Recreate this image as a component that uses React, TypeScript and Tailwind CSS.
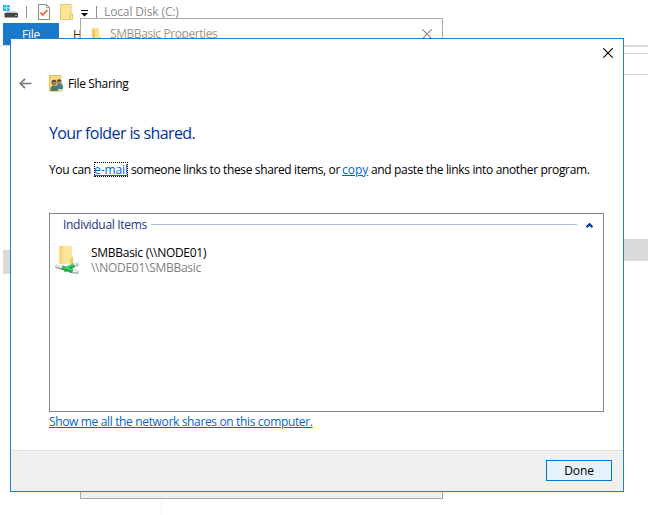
import React from "react";

function DriveIcon() {
  return (
    <svg width="16" height="14" viewBox="0 0 16 14" className="shrink-0">
      <g fill="#10b7f2">
        <rect x="0" y="0" width="3" height="2.6" />
        <rect x="3.7" y="0" width="3" height="2.6" />
        <rect x="0" y="3.3" width="3" height="2.7" />
        <rect x="3.7" y="3.3" width="3" height="2.7" />
      </g>
      <path d="M3.500 6.500h9.500l2 2.500H1.500z" fill="#b9bcbd" />
      <rect x="1.500" y="8" width="13.500" height="4.500" rx=".5" fill="#42474a" />
      <rect x="12" y="10" width="2" height="1" fill="#4be07a" />
    </svg>
  );
}

function PageCheckIcon() {
  return (
    <svg width="12" height="16" viewBox="0 0 12 16" className="shrink-0">
      <path d="M.5.5h8l3 3v12H.5z" fill="#fbfbfb" stroke="#8b8b8b" />
      <path d="M8.5.5v3h3" fill="none" stroke="#8b8b8b" strokeWidth=".8" />
      <path d="M2.500 8.500l2.200 2.500 4.800-5" fill="none" stroke="#e9622c" strokeWidth="1.700" />
    </svg>
  );
}

function FolderIcon({ className = "" }: { className?: string }) {
  return (
    <svg width="13" height="16" viewBox="0 0 13 16" className={"shrink-0 " + className}>
      <path d="M.5.5h10.500V9.500h1.500v6H.5z" fill="#fde597" stroke="#e9cb6c" />
      <path d="M10 15v-4.500l1-1" fill="none" stroke="#e0bd55" />
    </svg>
  );
}

function SmallFolderIcon() {
  return (
    <svg width="9" height="13" viewBox="0 0 9 13" className="shrink-0">
      <path d="M0 0l1-.5h6V8l2 1v3H2z" fill="#fbe08a" />
      <path d="M0 0l3 2v11l-3-1.500z" fill="#f2c95c" />
    </svg>
  );
}

function PeopleFolderIcon() {
  return (
    <svg width="15" height="17" viewBox="0 0 15 17" className="shrink-0">
      <path d="M.5.5h11V8l1.500 1v7H.5z" fill="#fbd978" stroke="#e7bd4f" />
      <path d="M7 12q0-3.500 3.500-3.500T14 12v2H7z" fill="#3f7fae" />
      <circle cx="10.300" cy="7" r="2.300" fill="#a9794e" />
      <path d="M8 6.500q0-2.300 2.300-2.300t2.400 2.500l-1.200-1z" fill="#4a4034" />
      <path d="M1.500 14.500q0-4 3.700-4t3.700 4v1.500H1.500z" fill="#437c66" />
      <circle cx="5" cy="8" r="2.500" fill="#a77a50" />
      <path d="M2.500 7.500q0-2.700 2.500-2.700t2.600 2.700L6 6.500z" fill="#4f4637" />
    </svg>
  );
}

function SharedFolderIcon() {
  return (
    <svg width="26" height="30" viewBox="0 0 26 30" className="shrink-0">
      <path d="M4 1h13v10l1 1v7H7z" fill="#f5d071" />
      <path d="M8 1h9v10l1 1v7H8z" fill="#fce49b" />
      <path d="M4 1l4 2.500V20l-4-1.500z" fill="#f8da83" />
      <path d="M15.500 13l2.500-1v7h-2.500z" fill="#edc764" />
      <path d="M2 21.500l6 2M17.500 26.500l4.500.8M18 20.500l4-1.200" stroke="#a9adab" strokeWidth="3.600" strokeLinecap="round" />
      <path d="M2 20.800l6 1.500M18 25.800l4 .8M18 19.700l4-1" stroke="#eeefef" strokeWidth="1.800" strokeLinecap="round" />
      <path d="M7 22.300l10.500 4M9 25.500L19 20.300" stroke="#23a94a" strokeWidth="4.200" />
      <path d="M7.500 21.500l9.500 3.500M11 22.500l7-3" stroke="#48d267" strokeWidth="1.800" />
    </svg>
  );
}

function CloseIcon({ className }: { className: string }) {
  return (
    <svg width="10" height="10" viewBox="0 0 10 10" className={className}>
      <path d="M.3.3l9.400 9.400M9.700.3L.3 9.700" stroke="currentColor" strokeWidth="1.200" />
    </svg>
  );
}

function Explorer() {
  return (
    <div className="flex h-full flex-col">
      <header className="flex h-[23px] items-center pl-[3px]">
        <DriveIcon />
        <i className="ml-[7px] h-3 w-px bg-[#8f8f8f]" />
        <span className="ml-[11px] flex"><PageCheckIcon /></span>
        <FolderIcon className="ml-[10px]" />
        <svg width="7" height="7" viewBox="0 0 7 7" className="mt-[3px] ml-2">
          <path d="M0 .5h7" stroke="#000" />
          <path d="M0 3h7L3.500 6.500z" />
        </svg>
        <i className="ml-2 h-3 w-px bg-[#8f8f8f]" />
        <span className="ml-[7px] text-[12px] leading-4 tracking-[-0.13px] whitespace-nowrap text-[#8c8c8c]">Local Disk (C:)</span>
      </header>
      <nav className="flex h-[23px] border-b border-[#dadbdc] pl-[3px]">
        <span className="w-14 bg-[#1979ca] text-center text-[12px] leading-[24px] tracking-[-0.2px] text-white">File</span>
        <span className="pl-[14px] text-[12px] leading-[24px] text-[#333]">Home</span>
      </nav>
      <div className="flex grow justify-between">
        <div className="w-[10px] pt-[204px] pl-[3px]">
          <div className="h-6 bg-[#d9d9d9]" />
        </div>
        <div className="mt-[440px] ml-[151px] w-px grow-0 bg-[#f3f3f3]" />
        <div className="ml-auto w-6">
          <div className="h-2 border-y border-[#d9d9d9]" />
          <div className="h-[21px] border-b border-[#d9d9d9]" />
          <div className="mt-[164px] h-[22px] bg-[#d9d9d9]" />
        </div>
      </div>
    </div>
  );
}

function PropertiesWindow() {
  return (
    <div className="absolute top-[18px] left-20 flex h-[481px] w-[363px] flex-col border border-[#a9a9a9] bg-[#f0f0f0]">
      <div className="flex h-[30px] items-center bg-white pl-[11px] text-[#969696]">
        <SmallFolderIcon />
        <span className="ml-[9px] text-[12px] leading-4 tracking-[-0.42px] whitespace-nowrap">SMBBasic Properties</span>
        <CloseIcon className="mr-[10px] ml-auto text-[#8b8b8b]" />
      </div>
    </div>
  );
}

function SharingDialog() {
  return (
    <main className="absolute top-[38px] left-[10px] flex h-[454px] w-[614px] flex-col border border-[#1c80d2] bg-white text-[12px] leading-4 tracking-[-0.35px] whitespace-nowrap">
      <div className="flex h-[27px] justify-end pt-[9px] pr-[10px]">
        <CloseIcon className="text-black" />
      </div>
      <div className="flex h-[34px] items-center pl-2">
        <svg width="13" height="11" viewBox="0 0 13 11">
          <path d="M6 .8L1.300 5.500 6 10.200M1.500 5.500H12.500" fill="none" stroke="#7a7a7a" strokeWidth="1.700" />
        </svg>
        <span className="ml-[17px]"><PeopleFolderIcon /></span>
        <span className="ml-1 pt-[2px] text-black">File Sharing</span>
      </div>
      <section className="flex grow flex-col items-start pl-[38px]">
        <h1 className="mt-[21px] text-[16px] leading-6 tracking-[-0.6px] text-[#003399]">Your folder is shared.</h1>
        <p className="mt-[17px] flex h-4 text-black">
          <span className="w-[45px]">You can</span>
          <a className="mr-[3px] h-[15px] w-[34px] tracking-[-0.1px] text-[#0066cc] underline outline-1 -outline-offset-1 outline-dotted outline-black">e-mail</a>
          <span className="w-[211px] tracking-[-0.37px]">someone links to these shared items, or</span>
          <a className="mr-[3px] w-[26px] tracking-normal text-[#0066cc] underline">copy</a>
          <span>and paste the links into another program.</span>
        </p>
        <div className="mt-[35px] h-[199px] w-[555px] border border-[#828790]">
          <div className="flex h-[22px] items-center pr-[10px] pl-[13px]">
            <span className="w-[88px] tracking-[-0.3px] text-[#1e3287]">Individual Items</span>
            <i className="mb-px h-px w-[426px] bg-[#b0bedb]" />
            <svg width="7" height="5" viewBox="0 0 7 5" className="ml-auto">
              <path d="M.5 4.200L3.500 1.200 6.500 4.200" fill="none" stroke="#003399" strokeWidth="2.200" />
            </svg>
          </div>
          <div className="flex pt-[9px] pl-[5px]">
            <SharedFolderIcon />
            <div className="ml-[10px] leading-[15px] tracking-[-0.28px]">
              <div className="text-black">SMBBasic (\\NODE01)</div>
              <div className="text-[#808080]">\\NODE01\SMBBasic</div>
            </div>
          </div>
        </div>
        <a className="mt-[2px] text-[#0066cc] underline">Show me all the network shares on this computer.</a>
      </section>
      <footer className="flex h-[41px] justify-end border-t border-[#dfdfdf] bg-[#f0f0f0] pt-[9px] pr-[11px]">
        <button className="h-[21px] w-[66px] border border-[#0078d7] bg-[#e5f1fb] text-[12px] leading-[19px] tracking-[-0.1px] text-black">Done</button>
      </footer>
    </main>
  );
}

export default function App() {
  return (
    <div className="relative h-[515px] w-[648px] overflow-hidden bg-white font-['Open_Sans','Noto_Sans',sans-serif]">
      <Explorer />
      <PropertiesWindow />
      <SharingDialog />
    </div>
  );
}
